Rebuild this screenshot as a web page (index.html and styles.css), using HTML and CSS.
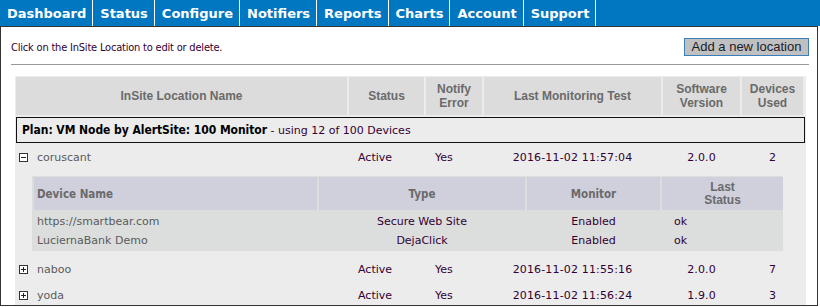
FILE: index.html
```html
<!DOCTYPE html>
<html>
<head>
<meta charset="utf-8">
<link rel="stylesheet" href="styles.css">
</head>
<body>
<nav class="tabs">
  <a class="tab">Dashboard</a><a class="tab">Status</a><a class="tab">Configure</a><a class="tab">Notifiers</a><a class="tab">Reports</a><a class="tab">Charts</a><a class="tab">Account</a><a class="tab">Support</a>
</nav>
<div class="frame">
  <div class="toolbar">
    <span class="hint">Click on the InSite Location to edit or delete.</span>
    <button class="add-btn">Add a new location</button>
  </div>
  <div class="rule"></div>
  <div class="loc-table">
    <div class="grid head">
      <div class="hcell">InSite Location Name</div>
      <div class="hcell">Status</div>
      <div class="hcell">Notify<br>Error</div>
      <div class="hcell">Last Monitoring Test</div>
      <div class="hcell">Software<br>Version</div>
      <div class="hcell">Devices<br>Used</div>
    </div>
    <div class="plan"><b>Plan: VM Node by AlertSite: 100 Monitor</b><span class="plan-usage"> - using 12 of 100 Devices</span></div>
    <div class="grid loc">
      <div class="name"><svg class="toggle" width="9" height="9" viewBox="0 0 9 9"><rect x="0.5" y="0.5" width="8" height="8" fill="#fff" stroke="#333"/><path d="M2 4.5h5" stroke="#222"/></svg><span>coruscant</span></div>
      <div class="val left">Active</div>
      <div class="val left">Yes</div>
      <div class="val">2016-11-02 11:57:04</div>
      <div class="val">2.0.0</div>
      <div class="val">2</div>
    </div>
    <div class="devices-wrap">
      <div class="devices">
        <div class="dgrid dhead">
          <div class="dh dh-name">Device Name</div>
          <div class="dh">Type</div>
          <div class="dh">Monitor</div>
          <div class="dh dh-arial">Last<br>Status</div>
        </div>
        <div class="dgrid drow">
          <div class="dname">https://smartbear.com</div>
          <div class="dval">Secure Web Site</div>
          <div class="dval">Enabled</div>
          <div class="dval left">ok</div>
        </div>
        <div class="dgrid drow">
          <div class="dname">LuciernaBank Demo</div>
          <div class="dval">DejaClick</div>
          <div class="dval">Enabled</div>
          <div class="dval left">ok</div>
        </div>
      </div>
    </div>
    <div class="grid loc">
      <div class="name"><svg class="toggle" width="9" height="9" viewBox="0 0 9 9"><rect x="0.5" y="0.5" width="8" height="8" fill="#fff" stroke="#333"/><path d="M2 4.5h5M4.5 2v5" stroke="#222"/></svg><span>naboo</span></div>
      <div class="val left">Active</div>
      <div class="val left">Yes</div>
      <div class="val">2016-11-02 11:55:16</div>
      <div class="val">2.0.0</div>
      <div class="val">7</div>
    </div>
    <div class="grid loc">
      <div class="name"><svg class="toggle" width="9" height="9" viewBox="0 0 9 9"><rect x="0.5" y="0.5" width="8" height="8" fill="#fff" stroke="#333"/><path d="M2 4.5h5M4.5 2v5" stroke="#222"/></svg><span>yoda</span></div>
      <div class="val left">Active</div>
      <div class="val left">Yes</div>
      <div class="val">2016-11-02 11:56:24</div>
      <div class="val">1.9.0</div>
      <div class="val">3</div>
    </div>
  </div>
</div>
</body>
</html>
```
FILE: styles.css
```css
html, body {
  margin: 0;
  padding: 0;
  background: #fff;
}
body {
  font-family: "DejaVu Sans", sans-serif;
  font-size: 11px;
  color: #330033;
}
.tabs {
  display: flex;
  height: 26px;
  background: #0077c0;
}
.tab {
  display: flex;
  align-items: center;
  padding: 0 6px 0 7px;
  border-right: 1px solid #fff;
  color: #fff;
  font-weight: bold;
  font-size: 13px;
}
.frame {
  box-sizing: border-box;
  width: 818px;
  height: 280px;
  border: 1px solid #333;
  padding: 11px 8px 0 10px;
  overflow: hidden;
}
.toolbar {
  display: flex;
  justify-content: space-between;
  align-items: center;
  height: 18px;
}
.hint {
  font-family: "DejaVu Sans Condensed", "DejaVu Sans", sans-serif;
  font-stretch: condensed;
  letter-spacing: -0.2px;
  color: #330033;
}
.add-btn {
  box-sizing: border-box;
  height: 18px;
  width: 125px;
  padding: 0;
  margin: 0;
  border: 1px solid #3b7fb8;
  background: #c0c0c0;
  color: #1a1a2a;
  font-family: "Liberation Sans", Arial, sans-serif;
  font-size: 13px;
  line-height: 16px;
}
.rule {
  margin-top: 8px;
  height: 1px;
  background: #999;
}
.loc-table {
  margin: 11px 3px 0 4px;
  background: #ececec;
  padding: 1px;
  display: flex;
  flex-direction: column;
  gap: 2px;
}
.grid {
  display: grid;
  grid-template-columns: 331px 75px 56px 177px 77px 61px;
  column-gap: 2px;
}
.head {
  height: 38px;
}
.hcell {
  background: #dcdcdc;
  display: flex;
  align-items: center;
  justify-content: center;
  text-align: center;
  font-family: "Liberation Sans", Arial, sans-serif;
  font-weight: bold;
  font-size: 12px;
  line-height: 14px;
  color: #6a6a6a;
}
.plan {
  box-sizing: border-box;
  height: 26px;
  border: 1px solid #111;
  padding-left: 5px;
  line-height: 24px;
  color: #000;
}
.plan b {
  font-family: "DejaVu Sans Condensed", "DejaVu Sans", sans-serif;
  font-stretch: condensed;
  font-size: 12px;
  letter-spacing: -0.05px;
}
.plan-usage {
  white-space: pre;
  color: #330033;
}
.loc {
  height: 24px;
  align-items: center;
}
.loc:nth-child(3) {
  height: 25px;
}
.name {
  display: flex;
  align-items: center;
  padding-left: 3px;
  gap: 9px;
  color: #5a5a5a;
}
.toggle {
  display: block;
}
.val {
  text-align: center;
  letter-spacing: 0.15px;
}
.val.left {
  text-align: left;
  padding-left: 9px;
  letter-spacing: 0;
}
.devices-wrap {
  height: 83px;
  padding: 4px 0 0 16px;
  box-sizing: border-box;
}
.devices {
  width: 751px;
  box-sizing: border-box;
  background: #dcdedd;
  padding: 1px 2px 1px;
}
.dgrid {
  display: grid;
  grid-template-columns: 283px 206px 133px 121px;
  column-gap: 2px;
}
.dhead {
  height: 33px;
}
.dh {
  background: #d0d0dc;
  display: flex;
  align-items: center;
  justify-content: center;
  text-align: center;
  font-family: "DejaVu Sans Condensed", "DejaVu Sans", sans-serif;
  font-stretch: condensed;
  font-weight: bold;
  font-size: 11.5px;
  color: #6a6a6a;
}
.dh-name {
  justify-content: flex-start;
  padding-left: 3px;
}
.dh-arial {
  font-family: "Liberation Sans", Arial, sans-serif;
  font-stretch: normal;
  font-size: 12px;
  line-height: 13px;
}
.drow {
  height: 19px;
  align-items: center;
}
.drow:nth-child(2) {
  margin-top: 2px;
}
.dname {
  padding-left: 3px;
  color: #5a5a5a;
}
.dval {
  text-align: center;
}
.dval.left {
  text-align: left;
  padding-left: 12px;
}
```
